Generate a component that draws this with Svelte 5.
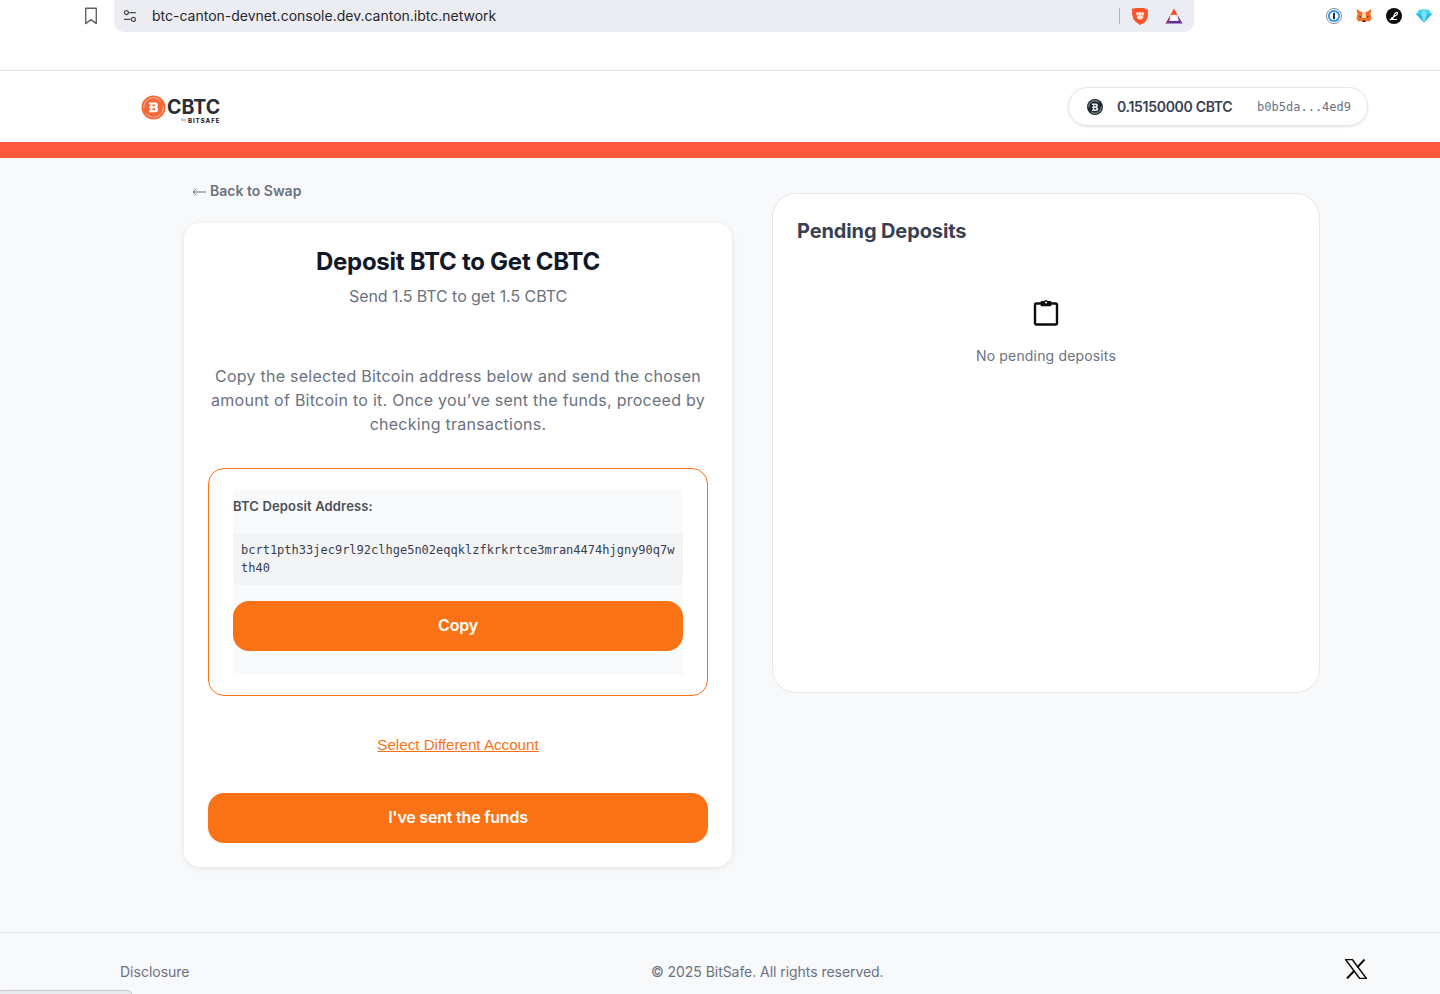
<script>
  const address = "bcrt1pth33jec9rl92clhge5n02eqqklzfkrkrtce3mran4474hjgny90q7wth40";
</script>

<div class="page">
  <div class="chrome">
    <svg class="bookmark" width="14" height="18" viewBox="0 0 14 18" fill="none" stroke="#5f6066" stroke-width="1.4" stroke-linejoin="round">
      <path d="M1.7 1.2h10.6v15.4L7 12.6l-5.3 4z" />
    </svg>
    <div class="urlbar">
      <svg width="14" height="14" viewBox="0 0 14 14" fill="none" stroke="#4a4b50" stroke-width="1.2">
        <circle cx="3.4" cy="3.6" r="2" />
        <path d="M6.2 3.6h6.6M1 10.4h6.6" />
        <circle cx="10.4" cy="10.4" r="2" />
      </svg>
      <span class="url">btc-canton-devnet.console.dev.canton.ibtc.network</span>
      <span class="urlsep"></span>
      <svg class="brave" width="18" height="19" viewBox="0 0 18 19">
        <path d="M4.6 1h8.8l1.300 1.600 1.800-.3.7 1.600-.6 1.400.6 1.600-1.500 6.200-2 2.500L9 18l-4.700-3.400-2-2.500L.8 5.900l.6-1.600-.6-1.400.7-1.600 1.800.3z" fill="#fb542b" />
        <path d="M5.600 5.200l1.900.3L9 5l1.500.5 1.900-.3.900 1.200-1.300 2.800.5 1.500-1.800 1.300L9 13.600l-1.500-1.600-1.800-1.300.5-1.500-1.300-2.800z" fill="#ffe3d6" />
        <path d="M7.800 12.200h2.400L9 13.400zM6.200 7.800l1.700.5-.4 1zM11.800 7.800l-1.700.5.4 1z" fill="#fb542b" />
      </svg>
      <svg class="bat" width="18" height="16" viewBox="0 0 18 16">
        <path d="M9 .5L5.500 7h7z" fill="#ff4724" />
        <path d="M5.500 7L.5 15.500 4 13.500z" fill="#9e1f63" />
        <path d="M12.500 7l5 8.500L14 13.500z" fill="#662d91" />
        <path d="M.5 15.500h17L14 13H4z" fill="#662d91" />
        <path d="M9 6L6 12h6z" fill="#fff" />
      </svg>
    </div>
    <div class="extensions">
      <svg width="16" height="16" viewBox="0 0 16 16">
        <circle cx="8" cy="8" r="7.600" fill="#fff" stroke="#6d7178" stroke-width=".8" />
        <circle cx="8" cy="8" r="6" fill="#1a8cff" />
        <circle cx="8" cy="8" r="4.300" fill="#fff" />
        <rect x="7" y="4.800" width="2" height="6.400" rx=".6" fill="#1b2a3c" />
      </svg>
      <svg width="16" height="16" viewBox="0 0 16 16">
        <path d="M.5 1l6 3.500h3L15.500 1l-1 5 1 4-1.500 3.500-3-.6L9.500 14h-3L5 12.900l-3 .6L.5 10l1-4z" fill="#f2702a" />
        <path d="M6.500 4.500h3l.8 5.500h-4.600z" fill="#fbd3b4" />
        <path d="M3 8l2.500.4-.9 1.600zM13 8l-2.500.4.900 1.600z" fill="#5d3a26" />
        <path d="M6.500 14h3l-.5-1.800H7z" fill="#3a2a24" />
      </svg>
      <svg width="16" height="16" viewBox="0 0 16 16">
        <circle cx="8" cy="8" r="8" fill="#0b0b0b" />
        <path d="M4 11.500c1.500.6 2.500-.2 3.200-1.800l1.400-3.400c.5-1.300 1.700-2.100 2.500-1.700.9.500.1 2-1.200 2.800L6 9.800c-.9.600-.6 1.700.6 1.700h3.900" fill="none" stroke="#fff" stroke-width="1.200" stroke-linecap="round" />
      </svg>
      <svg width="16" height="14" viewBox="0 0 16 14">
        <path d="M3.500.5h9L16 5l-8 8.500L0 5z" fill="#45d2f5" />
        <path d="M0 5h16L8 13.500z" fill="#2ab8ea" />
        <path d="M5 5l3-4.500L11 5l-3 8.500z" fill="#7be5fb" />
      </svg>
    </div>
  </div>

  <header class="topbar">
    <div class="logo">
      <svg width="25" height="25" viewBox="0 0 25 25">
        <circle cx="12.500" cy="12.500" r="12" fill="#f4693a" />
        <circle cx="12.500" cy="12.500" r="9.800" fill="none" stroke="#ffd9c9" stroke-width=".7" stroke-dasharray="24 6" />
        <path d="M8 7.500h6.500a2.500 2.500 0 0 1 1.400 4.500 2.800 2.800 0 0 1-1.400 5.200H8v-2h1.400v-2H8v-1.700h1.400v-2H8z" fill="#fff" />
        <path d="M11.400 9.500h2.500v1.800h-2.500zM11.400 13.200h2.800v2h-2.800z" fill="#f4693a" />
      </svg>
      <div class="logo-words">
        <span class="logo-name">CBTC</span>
        <span class="logo-by"><small>by</small><b>BITSAFE</b></span>
      </div>
    </div>
    <div class="wallet">
      <svg width="16" height="16" viewBox="0 0 16 16">
        <circle cx="8" cy="8" r="8" fill="#1f2a30" />
        <circle cx="8" cy="8" r="6.300" fill="none" stroke="#dfe5e6" stroke-width=".6" stroke-dasharray="14 5" />
        <path d="M5 4.500h4a2 2 0 0 1 1.200 3.600A2.100 2.100 0 0 1 9.300 12H5v-1.400h1V9H5V7.700h1V5.900H5z" fill="#dfe5e6" />
        <path d="M7.300 5.900h1.500v1.300H7.300zM7.300 9h1.900v1.500H7.300z" fill="#1f2a30" />
      </svg>
      <span class="balance">0.15150000 CBTC</span>
      <span class="party">b0b5da...4ed9</span>
    </div>
  </header>
  <div class="accent"></div>

  <main>
    <div class="content">
      <section class="left">
        <a class="back" href="#swap">
          <svg width="14" height="8" viewBox="0 0 14 8" fill="none" stroke="#6b7280" stroke-width="1">
            <path d="M14 4H1M4 1L1 4l3 3" />
          </svg>
          Back to Swap
        </a>
        <div class="card">
          <h1>Deposit BTC to Get CBTC</h1>
          <p class="sub">Send 1.5 BTC to get 1.5 CBTC</p>
          <p class="intro">
            Copy the selected Bitcoin address below and send the chosen amount of Bitcoin to it. Once
            you’ve sent the funds, proceed by checking transactions.
          </p>
          <div class="address-box">
            <div class="address-inner">
              <div class="address-label">BTC Deposit Address:</div>
              <div class="address">{address}</div>
              <button class="primary">Copy</button>
            </div>
          </div>
          <a class="switch" href="#account">Select Different Account</a>
          <button class="primary">I've sent the funds</button>
        </div>
      </section>

      <section class="pending">
        <h2>Pending Deposits</h2>
        <div class="empty">
          <svg width="26" height="28" viewBox="0 0 26 28" fill="none" stroke="#0b0b0b" stroke-width="2.400" stroke-linejoin="round">
            <rect x="2" y="5.500" width="22" height="21" rx="1.500" />
            <path d="M8.500 5.500V3.800h3a1.600 1.600 0 0 1 3 0h3v3.700h-9z" fill="#0b0b0b" stroke-width="1.600" />
            <circle cx="13" cy="4.400" r="1" fill="#fff" stroke="none" />
          </svg>
          <p>No pending deposits</p>
        </div>
      </section>
    </div>
  </main>

  <footer>
    <a href="#disclosure">Disclosure</a>
    <span class="copyright">© 2025 BitSafe. All rights reserved.</span>
    <svg width="22" height="20" viewBox="0 0 22 20">
      <path d="M.5.500h6.800l14.200 19h-6.800z" fill="none" stroke="#0b0b0b" stroke-width="1.500" />
      <path d="M19.500.5L12.300 8.400M9.500 11.500L2 19.500" stroke="#0b0b0b" stroke-width="2" fill="none" />
    </svg>
  </footer>

  <div class="status-bubble"></div>
</div>

<style>
  :global(body) {
    margin: 0;
    background: #f8f9fb;
    overflow: hidden;
  }
  .page {
    position: relative;
    height: 994px;
    overflow: hidden;
    display: flex;
    flex-direction: column;
    font-family: Inter, "Noto Sans", sans-serif;
    color: #6b7280;
  }
  .chrome {
    height: 71px;
    flex: none;
    box-sizing: border-box;
    background: #fff;
    border-bottom: 1px solid #e4e5e8;
    display: flex;
    align-items: flex-start;
    padding-left: 84px;
  }
  .bookmark {
    margin-top: 7px;
  }
  .urlbar {
    margin-left: 16px;
    width: 1080px;
    height: 32px;
    box-sizing: border-box;
    padding: 0 11px 0 9px;
    background: #ecedf2;
    border-radius: 0 0 10px 10px;
    display: flex;
    align-items: center;
  }
  .url {
    margin: 0 0 2px 15px;
    font-size: 14px;
    color: #26272b;
    flex: 1;
  }
  .urlsep {
    width: 1px;
    height: 16px;
    background: #b5b6ba;
  }
  .brave {
    margin-left: 11px;
  }
  .bat {
    margin-left: 16px;
  }
  .extensions {
    margin-left: 132px;
    margin-top: 8px;
    display: flex;
    gap: 14px;
    align-items: center;
  }
  .topbar {
    height: 71px;
    flex: none;
    box-sizing: border-box;
    background: #fff;
    display: flex;
    justify-content: space-between;
    align-items: center;
    padding: 0 72px 0 141px;
  }
  .logo {
    display: flex;
    align-items: flex-start;
    gap: 1px;
    margin-top: 5px;
  }
  .logo-words {
    display: flex;
    flex-direction: column;
    align-items: flex-end;
    margin-top: 1px;
  }
  .logo-name {
    font-size: 19.6px;
    line-height: 22px;
    font-weight: 700;
    color: #2a2e35;
  }
  .logo-by {
    font-size: 6px;
    line-height: 5px;
    color: #1f2329;
    display: flex;
    gap: 1px;
    align-items: center;
    letter-spacing: 1px;
  }
  .logo-by small {
    font-size: 3px;
  }
  .logo-by b {
    font-weight: 800;
  }
  .wallet {
    width: 300px;
    height: 39px;
    box-sizing: border-box;
    padding: 0 16px 0 18px;
    display: flex;
    align-items: center;
    background: #fff;
    border: 1px solid #e5e7eb;
    border-radius: 20px;
    box-shadow: 0 1px 3px rgba(0, 0, 0, 0.1);
  }
  .balance {
    margin-left: 14px;
    font-size: 14px;
    font-weight: 600;
    color: #374151;
    letter-spacing: -0.3px;
  }
  .party {
    margin-left: auto;
    font-family: "DejaVu Sans Mono", monospace;
    font-size: 12px;
    color: #6b7280;
  }
  .accent {
    height: 16px;
    flex: none;
    background: #fb5a3c;
  }
  main {
    flex: 1;
    min-height: 0;
    box-sizing: border-box;
    background: #f8f9fb;
    padding: 23px 0 0 184px;
  }
  .content {
    width: 1136px;
    display: grid;
    grid-template-columns: 548px 548px;
    gap: 40px;
    align-items: start;
  }
  .left {
    display: flex;
    flex-direction: column;
  }
  .back {
    display: flex;
    align-items: center;
    gap: 4px;
    margin-left: 8px;
    margin-bottom: 22px;
    font-size: 14px;
    line-height: 20px;
    font-weight: 600;
    color: #6b7280;
    text-decoration: none;
  }
  .back svg {
    margin-top: 2px;
  }
  .card {
    box-sizing: border-box;
    height: 644px;
    padding: 24px;
    background: #fff;
    border-radius: 16px;
    box-shadow: 0 1px 6px rgba(0, 0, 0, 0.09);
    display: flex;
    flex-direction: column;
    align-items: stretch;
    text-align: center;
  }
  h1 {
    margin: 1px 0 0;
    font-size: 24px;
    line-height: 28px;
    font-weight: 700;
    color: #111827;
    letter-spacing: -0.26px;
  }
  .sub {
    margin: 8px 0 0;
    font-size: 16px;
    line-height: 24px;
    color: #6b7280;
    letter-spacing: -0.07px;
  }
  .intro {
    margin: 56px 0 0;
    font-size: 16px;
    line-height: 24px;
    color: #6b7280;
    letter-spacing: 0.26px;
  }
  .address-box {
    margin-top: 32px;
    height: 228px;
    box-sizing: border-box;
    padding: 20px 24px;
    border: 1px solid #f97316;
    border-radius: 16px;
    background: #fff;
  }
  .address-inner {
    height: 100%;
    background: #f9fafb;
    text-align: left;
  }
  .address-label {
    padding-top: 9px;
    margin-bottom: 19px;
    font-size: 13px;
    line-height: 16px;
    font-weight: 600;
    color: #4b4f58;
    letter-spacing: 0.15px;
  }
  .address {
    box-sizing: border-box;
    height: 52px;
    padding: 8px;
    margin-bottom: 16px;
    background: #f3f4f6;
    border-radius: 4px;
    font-family: "DejaVu Sans Mono", monospace;
    font-size: 12px;
    line-height: 18px;
    color: #374151;
    word-break: break-all;
  }
  .primary {
    display: block;
    width: 100%;
    height: 50px;
    padding: 0 0 2px;
    border: none;
    border-radius: 16px;
    background: #f97316;
    color: #fff;
    font-family: Inter, sans-serif;
    font-size: 16px;
    font-weight: 600;
    letter-spacing: -0.2px;
    cursor: pointer;
  }
  .switch {
    margin-top: 40px;
    margin-bottom: 39px;
    font-family: "Liberation Sans", Arial, sans-serif;
    font-size: 15.15px;
    line-height: 18px;
    color: #f97316;
  }
  .pending {
    box-sizing: border-box;
    height: 500px;
    margin-top: 12px;
    padding: 24px;
    background: #fff;
    border: 1px solid #e5e7eb;
    border-radius: 24px;
  }
  h2 {
    margin: 0;
    font-size: 20px;
    line-height: 26px;
    font-weight: 700;
    color: #374151;
    letter-spacing: -0.12px;
  }
  .empty {
    margin-top: 54px;
    display: flex;
    flex-direction: column;
    align-items: center;
    color: #6b7280;
  }
  .empty p {
    margin: 20px 0 0;
    font-size: 14px;
    line-height: 20px;
    letter-spacing: 0.16px;
  }
  footer {
    position: relative;
    height: 62px;
    flex: none;
    box-sizing: border-box;
    padding: 27px 73px 0 120px;
    border-top: 1px solid #e5e7eb;
    background: #f8f9fb;
    display: flex;
    justify-content: space-between;
    align-items: flex-start;
    font-size: 14px;
    line-height: 24px;
    color: #6b7280;
  }
  footer a {
    color: inherit;
    text-decoration: none;
  }
  footer svg {
    margin-top: -1px;
  }
  .copyright {
    letter-spacing: -0.05px;
  }
  .status-bubble {
    position: absolute;
    left: -2px;
    bottom: -26px;
    width: 134px;
    height: 30px;
    box-sizing: border-box;
    background: #e9eaec;
    border: 1px solid #c9cacd;
    border-radius: 4px;
  }
</style>
